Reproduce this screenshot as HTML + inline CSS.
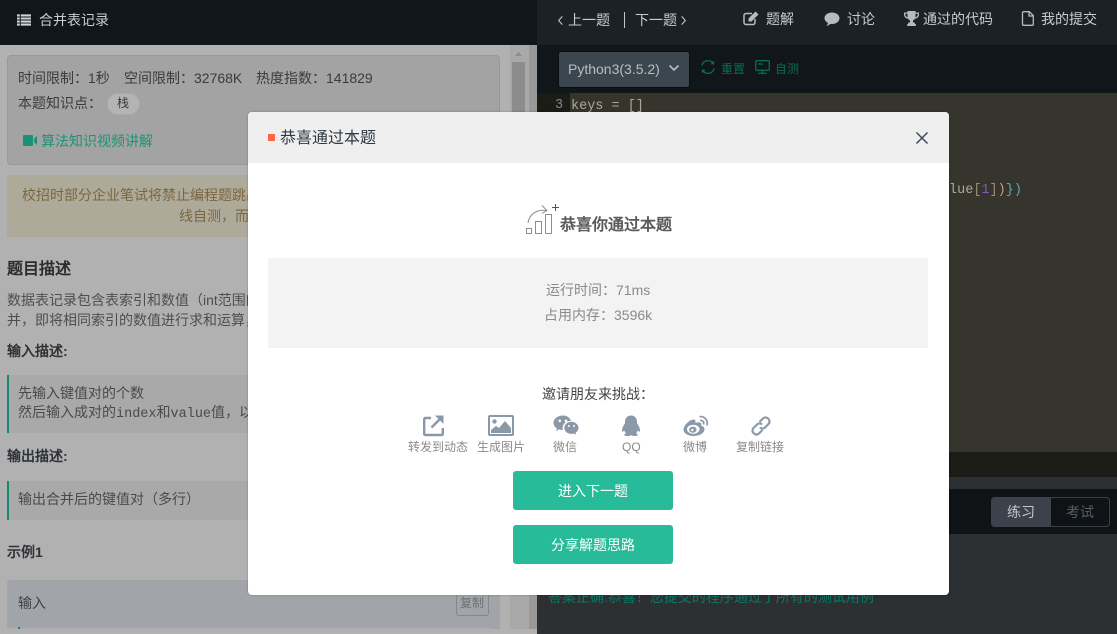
<!DOCTYPE html>
<html lang="zh">
<head>
<meta charset="utf-8">
<style>
html,body{margin:0;padding:0;width:1117px;height:634px;overflow:hidden;background:#2c3033}
body{font-family:"Liberation Sans","WenQuanYi Zen Hei",sans-serif;font-size:14px;position:relative}
.b{position:absolute}
.t{position:absolute;white-space:nowrap;line-height:20px;height:20px}
.m{font-family:"Liberation Mono","WenQuanYi Zen Hei",monospace;font-size:13.5px}
svg{position:absolute;overflow:visible}
</style>
</head>
<body>
<!-- left panel -->
<div class="b" style="left:0;top:0;width:537px;height:634px;background:#b1b1b1;overflow:hidden;color:#3b3b3b">
  <div class="b" style="left:0;top:0;width:537px;height:45px;background:#10161a"></div>
  <svg style="left:17px;top:14px" width="14" height="12" viewBox="0 0 15 12"><path fill="#d0d3d5" d="M0 0h3v2.200H0zM4 0h11v2.200H4zM0 3.300h3v2.200H0zM4 3.300h11v2.200H4zM0 6.600h3v2.200H0zM4 6.600h11v2.200H4zM0 9.800h3V12H0zM4 9.800h11V12H4z"/></svg>
  <div class="t" style="left:39px;top:10px;color:#c9cccd">合并表记录</div>

  <div class="b" style="left:7px;top:55px;width:491px;height:108px;background:#a3a3a3;border:1px solid #989898;border-radius:4px"></div>
  <div class="t" style="left:18px;top:68px">时间限制：1秒</div>
  <div class="t" style="left:124px;top:68px">空间限制：32768K</div>
  <div class="t" style="left:256px;top:68px">热度指数：141829</div>
  <div class="t" style="left:18px;top:93px">本题知识点：</div>
  <div class="b" style="left:107px;top:93px;width:33px;height:22px;border-radius:11px;background:#b4b4b4;border:1px solid #aaa;box-sizing:border-box"></div>
  <div class="t" style="left:117px;top:93px;font-size:12px">栈</div>
  <svg style="left:23px;top:135px" width="14" height="11" viewBox="0 0 14 11"><path fill="#1c9072" d="M1 0h8a1 1 0 0 1 1 1v9a1 1 0 0 1-1 1H1a1 1 0 0 1-1-1V1a1 1 0 0 1 1-1zM11 4l3-3v9l-3-3z"/></svg>
  <div class="t" style="left:41px;top:131px;color:#1f9375">算法知识视频讲解</div>

  <div class="b" style="left:7px;top:175px;width:493px;height:62px;background:#aeaa99"></div>
  <div class="t" style="left:22px;top:185px;color:#7b6640">校招时部分企业笔试将禁止编程题跳出页面，为提前适应，练习时请使用在</div>
  <div class="t" style="left:179px;top:206px;color:#7b6640">线自测，而非本地IDE。</div>

  <div class="t" style="left:7px;top:260px;font-size:16px;font-weight:bold;color:#2c2c2c">题目描述</div>
  <div class="t" style="left:7px;top:290px;color:#4e4e4e">数据表记录包含表索引和数值（int范围的正整数），请对表索引相同的记录进行合</div>
  <div class="t" style="left:7px;top:310px;color:#4e4e4e">并，即将相同索引的数值进行求和运算，输出按照索引值升序进行输出。</div>
  <div class="t" style="left:7px;top:341px;font-weight:bold;color:#2f3237">输入描述:</div>
  <div class="b" style="left:7px;top:375px;width:491px;height:58px;background:#a9a9a9;border-left:2px solid #148a70"></div>
  <div class="t" style="left:18px;top:383px;color:#4a4a4a">先输入键值对的个数</div>
  <div class="t" style="left:18px;top:402px;color:#4a4a4a">然后输入成对的<span class="m">index</span>和<span class="m">value</span>值，以空格隔开</div>
  <div class="t" style="left:7px;top:446px;font-weight:bold;color:#2f3237">输出描述:</div>
  <div class="b" style="left:7px;top:481px;width:491px;height:39px;background:#a9a9a9;border-left:2px solid #148a70"></div>
  <div class="t" style="left:18px;top:489px;color:#4a4a4a">输出合并后的键值对（多行）</div>
  <div class="t" style="left:7px;top:542px;font-weight:bold;color:#2f3237">示例1</div>
  <div class="b" style="left:7px;top:580px;width:493px;height:49px;background:#a1a4a8;border-radius:4px 4px 0 0"></div>
  <div class="t" style="left:18px;top:593px;color:#3f4246">输入</div>
  <div class="b" style="left:456px;top:590px;width:33px;height:26px;border:1px solid #85878a;border-radius:3px;box-sizing:border-box"></div>
  <div class="t" style="left:460px;top:593px;font-size:12px;color:#6e7073">复制</div>
  <div class="b" style="left:7px;top:627px;width:483px;height:2px;background:#a8aaad"></div>
  <div class="b" style="left:18px;top:627px;width:2px;height:2px;background:#148a70"></div>

  <!-- scrollbar -->
  <div class="b" style="left:510px;top:45px;width:19px;height:584px;background:#a9a9a9"></div>
  <div class="b" style="left:512px;top:62px;width:13px;height:400px;background:#8c8c8c"></div>
  <svg style="left:515px;top:52px" width="7" height="4" viewBox="0 0 7 4"><path fill="#8c8c8c" d="M3.500 0 7 4H0z"/></svg>
  <div class="b" style="left:529px;top:45px;width:8px;height:584px;background:#999"></div>
  <div class="b" style="left:0;top:629px;width:537px;height:5px;background:#b1b1b1"></div>
</div>

<!-- right panel -->
<div class="b" style="left:537px;top:0;width:580px;height:634px;background:#2c3033;overflow:hidden">
  <div class="b" style="left:0;top:0;width:580px;height:45px;background:#1b2127"></div>
  <div class="b" style="left:0;top:45px;width:580px;height:48px;background:#10161a"></div>
  <div class="b" style="left:0;top:93px;width:33px;height:384px;background:#1c1c17"></div>
  <div class="b" style="left:33px;top:93px;width:547px;height:359px;background:#36352d"></div>
  <div class="b" style="left:33px;top:452px;width:547px;height:25px;background:#1c1c17"></div>
  <div class="b" style="left:0;top:489px;width:580px;height:45px;background:#0f1316"></div>
</div>
<svg style="left:557px;top:15px" width="7" height="11" viewBox="0 0 7 12"><path fill="none" stroke="#c3c6c8" stroke-width="1.200" d="M5.500 1.500 1.500 6l4 4.500"/></svg>
<div class="t" style="left:568px;top:10px;color:#c9cccd">上一题</div>
<div class="b" style="left:624px;top:12px;width:1px;height:16px;background:#c3c6c8"></div>
<div class="t" style="left:635px;top:10px;color:#c9cccd">下一题</div>
<svg style="left:680px;top:15px" width="7" height="11" viewBox="0 0 7 12"><path fill="none" stroke="#c3c6c8" stroke-width="1.200" d="M1.500 1.500 5.500 6l-4 4.500"/></svg>

<svg style="left:743px;top:11px" width="16" height="15" viewBox="0 0 16 15"><path fill="none" stroke="#b5bbc0" stroke-width="1.500" d="M12 8v3.500a2 2 0 0 1-2 2H3a2 2 0 0 1-2-2v-7a2 2 0 0 1 2-2h6"/><path fill="#b5bbc0" d="M5.500 7.500 12.500.5l3 3-7 7H5.500z"/></svg>
<div class="t" style="left:766px;top:9px;color:#c9cccd">题解</div>
<svg style="left:824px;top:12px" width="16" height="15" viewBox="0 0 16 15"><path fill="#b5bbc0" d="M8 .5c4.200 0 7.500 2.500 7.500 5.700S12.200 12 8 12l-1.600-.1C5.300 13 3.800 13.800 2.400 14c.8-.9 1.400-2 1.500-3.200C2 9.800.5 8.100.5 6.200.5 3 3.800.5 8 .5z"/></svg>
<div class="t" style="left:847px;top:9px;color:#c9cccd">讨论</div>
<svg style="left:904px;top:11px" width="15" height="15" viewBox="0 0 15 15"><path fill="#b5bbc0" d="M3.500 0h8v1.500H15v2.200c0 2-1.700 3.600-4 4-.5.700-1.200 1.300-2 1.600v2.200h1.800V13h1v2H3.200v-2h1v-1.500H6V9.300c-.8-.3-1.500-.9-2-1.600-2.300-.4-4-2-4-4V1.500h3.500zM1.300 2.800v.9c0 1 .9 2 2.300 2.500-.1-.9-.1-2.100-.1-3.400zm12.400 0h-2.200c0 1.300 0 2.500-.1 3.400 1.400-.5 2.300-1.500 2.300-2.500z"/></svg>
<div class="t" style="left:923px;top:9px;color:#c9cccd">通过的代码</div>
<svg style="left:1022px;top:11px" width="12" height="15" viewBox="0 0 12 15"><path fill="none" stroke="#b5bbc0" stroke-width="1.300" d="M1.500.7h5.800l4 4v8.600a1 1 0 0 1-1 1h-8.800a1 1 0 0 1-1-1V1.700a1 1 0 0 1 1-1zM7 .7v4.300h4.300"/></svg>
<div class="t" style="left:1041px;top:9px;color:#c9cccd">我的提交</div>

<div class="b" style="left:558px;top:51px;width:132px;height:37px;background:#3b464e;border:1px solid #0a0d0f;border-radius:3px;box-sizing:border-box"></div>
<div class="t" style="left:568px;top:59px;color:#b8bec2">Python3(3.5.2)</div>
<svg style="left:668px;top:64px" width="12" height="8" viewBox="0 0 12 8"><path fill="none" stroke="#b8bec2" stroke-width="1.600" d="M1.500 1.500 6 6l4.500-4.500"/></svg>
<svg style="left:701px;top:59px" width="14" height="16" viewBox="0 0 14 16"><path fill="none" stroke="#0a6b58" stroke-width="1.300" d="M1 6.500A6 6 0 0 1 12 4.500M13 9.500A6 6 0 0 1 2 11.500"/><path fill="#0a6b58" d="M9.500 5.300 13.300 5.500 13 1.500zM4.500 10.700.7 10.500 1 14.500z"/></svg>
<div class="t" style="left:721px;top:59px;font-size:12px;color:#0a6b58">重置</div>
<svg style="left:755px;top:60px" width="15" height="14" viewBox="0 0 15 14"><path fill="none" stroke="#0a6b58" stroke-width="1.300" d="M1.500.7h12a.8.800 0 0 1 .8.800v8a.8.800 0 0 1-.8.800h-12a.8.800 0 0 1-.8-.8v-8a.8.800 0 0 1 .8-.8zM7.500 10.500v2.500M3.500 13.300h8M3 4h5"/></svg>
<div class="t" style="left:775px;top:59px;font-size:12px;color:#0a6b58">自测</div>

<div class="t m" style="left:555px;top:96px;color:#7d8a93">3</div>
<div class="t m" style="left:571px;top:97px;color:#a9a99f">keys = []</div>
<div class="t m" style="left:949px;top:181px;color:#a9a99f">lue<span style="color:#a08a78">[</span><span style="color:#7a5cc0">1</span><span style="color:#a08a78">]</span><span style="color:#c0a070">)</span><span style="color:#5aa8c0">}</span><span style="color:#5aa8c0">)</span></div>

<div class="b" style="left:991px;top:497px;width:119px;height:30px;box-sizing:border-box;border:1px solid #3a4047;border-radius:4px;background:#0f1316"></div>
<div class="b" style="left:991px;top:497px;width:60px;height:30px;background:#3c424b;border-radius:4px 0 0 4px"></div>
<div class="t" style="left:1007px;top:502px;color:#c3c6c8">练习</div>
<div class="t" style="left:1066px;top:502px;color:#565d65">考试</div>
<div class="t" style="left:548px;top:587px;color:#0a7a62">答案正确:恭喜！您提交的程序通过了所有的测试用例</div>

<!-- modal -->
<div class="b" style="left:248px;top:112px;width:701px;height:483px;background:#fff;border-radius:4px;overflow:hidden;box-shadow:0 0 2px rgba(0,0,0,.25)">
  <div class="b" style="left:0;top:0;width:701px;height:51px;background:#efefef"></div>
  <div class="b" style="left:20px;top:22px;width:7px;height:7px;background:#ff6547"></div>
  <div class="t" style="left:32px;top:17px;font-size:16px;color:#2f3a44">恭喜通过本题</div>
  <svg style="left:667px;top:19px" width="14" height="14" viewBox="0 0 14 14"><path fill="none" stroke="#3d4a58" stroke-width="1.500" d="M1.500 1.500l11 11M12.500 1.500l-11 11"/></svg>

  <svg style="left:277px;top:90px" width="36" height="33" viewBox="0 0 36 33"><g fill="none" stroke="#8d8d8d" stroke-width="1"><rect x="1.500" y="26.500" width="5" height="5"/><rect x="10.500" y="19.500" width="6" height="12"/><rect x="20.500" y="12.500" width="6" height="19"/><path d="M3 21C4 13 11 7 21 8.500M17 3.500l5 5-5 3"/></g><path stroke="#555" stroke-width="1" d="M27 5.500h7M30.500 2v7"/></svg>
  <div class="t" style="left:312px;top:104px;font-size:16px;font-weight:bold;color:#5a5a5a">恭喜你通过本题</div>

  <div class="b" style="left:20px;top:146px;width:660px;height:90px;background:#f3f3f3"></div>
  <div class="t" style="left:298px;top:168px;color:#8a8a8a">运行时间：71ms</div>
  <div class="t" style="left:296px;top:193px;color:#8a8a8a">占用内存：3596k</div>

  <div class="t" style="left:294px;top:272px;color:#444">邀请朋友来挑战：</div>

  <!-- share -->
  <svg style="left:175px;top:303px" width="21" height="21" viewBox="0 0 21 21"><path fill="none" stroke="#8a98a8" stroke-width="2.400" d="M8 3H2.200a1 1 0 0 0-1 1v15a1 1 0 0 0 1 1h16.600a1 1 0 0 0 1-1V13M8.500 12.500 18 3"/><path fill="#8a98a8" d="M12 .5h8.500V9z"/></svg>
  <div class="t" style="left:160px;top:325px;font-size:12px;color:#8a8a8a">转发到动态</div>
  <!-- image -->
  <svg style="left:240px;top:303px" width="26" height="21" viewBox="0 0 26 21"><rect x="1" y="1" width="24" height="19" rx="1" fill="none" stroke="#8a98a8" stroke-width="2"/><circle cx="6.500" cy="6.500" r="2.200" fill="#8a98a8"/><path fill="#8a98a8" d="M3 18v-3l5-4 3 2 6-7 6 7v5z"/></svg>
  <div class="t" style="left:229px;top:325px;font-size:12px;color:#8a8a8a">生成图片</div>
  <!-- wechat -->
  <svg style="left:305px;top:303px" width="26" height="21" viewBox="0 0 26 21"><path fill="#8a98a8" d="M10 .5C4.700.5.500 3.700.500 7.800c0 2.400 1.300 4.200 3.400 5.600L3 16l3-1.600c1.100.3 1.900.5 3 .5h.9c-.2-.6-.3-1.300-.3-2 0-3.800 3.300-6.900 7.400-6.900h.9C17.100 2.800 13.900.5 10 .5z"/><path fill="#8a98a8" d="M25.500 12.800c0-3.300-3.400-6.100-7.100-6.100-4 0-7.100 2.800-7.100 6.100 0 3.400 3.100 6.100 7.100 6.100.8 0 1.700-.2 2.500-.4l2.300 1.300-.6-2.100c1.800-1.300 2.900-2.900 2.900-4.900z"/><circle cx="6.800" cy="5.800" r="1.300" fill="#fff"/><circle cx="13" cy="5.800" r="1.300" fill="#fff"/><circle cx="15.800" cy="11" r="1" fill="#fff"/><circle cx="21" cy="11" r="1" fill="#fff"/></svg>
  <div class="t" style="left:305px;top:325px;font-size:12px;color:#8a8a8a">微信</div>
  <!-- qq -->
  <svg style="left:373px;top:303px" width="20" height="22" viewBox="0 0 20 22"><path fill="#8a98a8" d="M10 .5c3.700 0 6 2.800 6 6.200v1.700c1 1.300 2 3 2.600 4.700.6 1.900.5 3.400.1 3.600-.4.200-1.200-.5-1.900-1.500-.3 1.200-.9 2.300-1.800 3 1.100.4 1.800 1 1.800 1.500 0 .9-1.700 1.300-3.700 1.300-1.200 0-2.300-.3-3.100-.7-.8.400-1.900.7-3.100.7-2 0-3.700-.4-3.700-1.300 0-.5.700-1.100 1.800-1.500-.9-.7-1.500-1.800-1.800-3-.7 1-1.500 1.700-1.900 1.500-.4-.2-.5-1.700.1-3.600.6-1.700 1.600-3.400 2.600-4.700V6.700C4 3.300 6.300.5 10 .5z"/></svg>
  <div class="t" style="left:374px;top:325px;font-size:12px;color:#8a8a8a">QQ</div>
  <!-- weibo -->
  <svg style="left:435px;top:303px" width="26" height="22" viewBox="0 0 26 22"><path fill="#8a98a8" d="M11 21c-5.500 0-10.500-2.500-10.500-6.300 0-2.100 1.300-4.500 3.600-6.700C7.200 5 10.700 3.700 12 5c.6.600.6 1.600.3 2.900 2-.7 4.900-.9 5.700.3.400.6.300 1.400 0 2.300 2 .6 3.500 1.900 3.500 3.800C21.500 17.700 17.100 21 11 21z"/><ellipse cx="10.300" cy="14.300" rx="6.300" ry="4.600" fill="#fff"/><ellipse cx="9.800" cy="14.700" rx="3.700" ry="3.100" fill="#8a98a8"/><circle cx="9.300" cy="15" r="1.200" fill="#fff"/><path fill="none" stroke="#8a98a8" stroke-width="1.700" d="M16.500 1.700c4.800-.9 9 3.500 7.500 8.800M17 5.500c2.600-.5 4.300 1.700 3.500 4"/></svg>
  <div class="t" style="left:435px;top:325px;font-size:12px;color:#8a8a8a">微博</div>
  <!-- link -->
  <svg style="left:502px;top:303px" width="22" height="22" viewBox="0 0 22 22"><g fill="none" stroke="#8a98a8" stroke-width="2.200"><path d="M9.500 7 13 3.500a3.500 3.500 0 0 1 5 0l.5.500a3.500 3.500 0 0 1 0 5L15 12.500a3.500 3.500 0 0 1-5 0"/><path d="M12.500 15 9 18.500a3.500 3.500 0 0 1-5 0l-.5-.5a3.500 3.500 0 0 1 0-5L7 9.500a3.500 3.500 0 0 1 5 0"/></g></svg>
  <div class="t" style="left:488px;top:325px;font-size:12px;color:#8a8a8a">复制链接</div>

  <div class="b" style="left:265px;top:359px;width:160px;height:39px;background:#27bb9a;border-radius:3px;color:#fff;text-align:center;line-height:41px">进入下一题</div>
  <div class="b" style="left:265px;top:413px;width:160px;height:39px;background:#27bb9a;border-radius:3px;color:#fff;text-align:center;line-height:41px">分享解题思路</div>
</div>
</body>
</html>
